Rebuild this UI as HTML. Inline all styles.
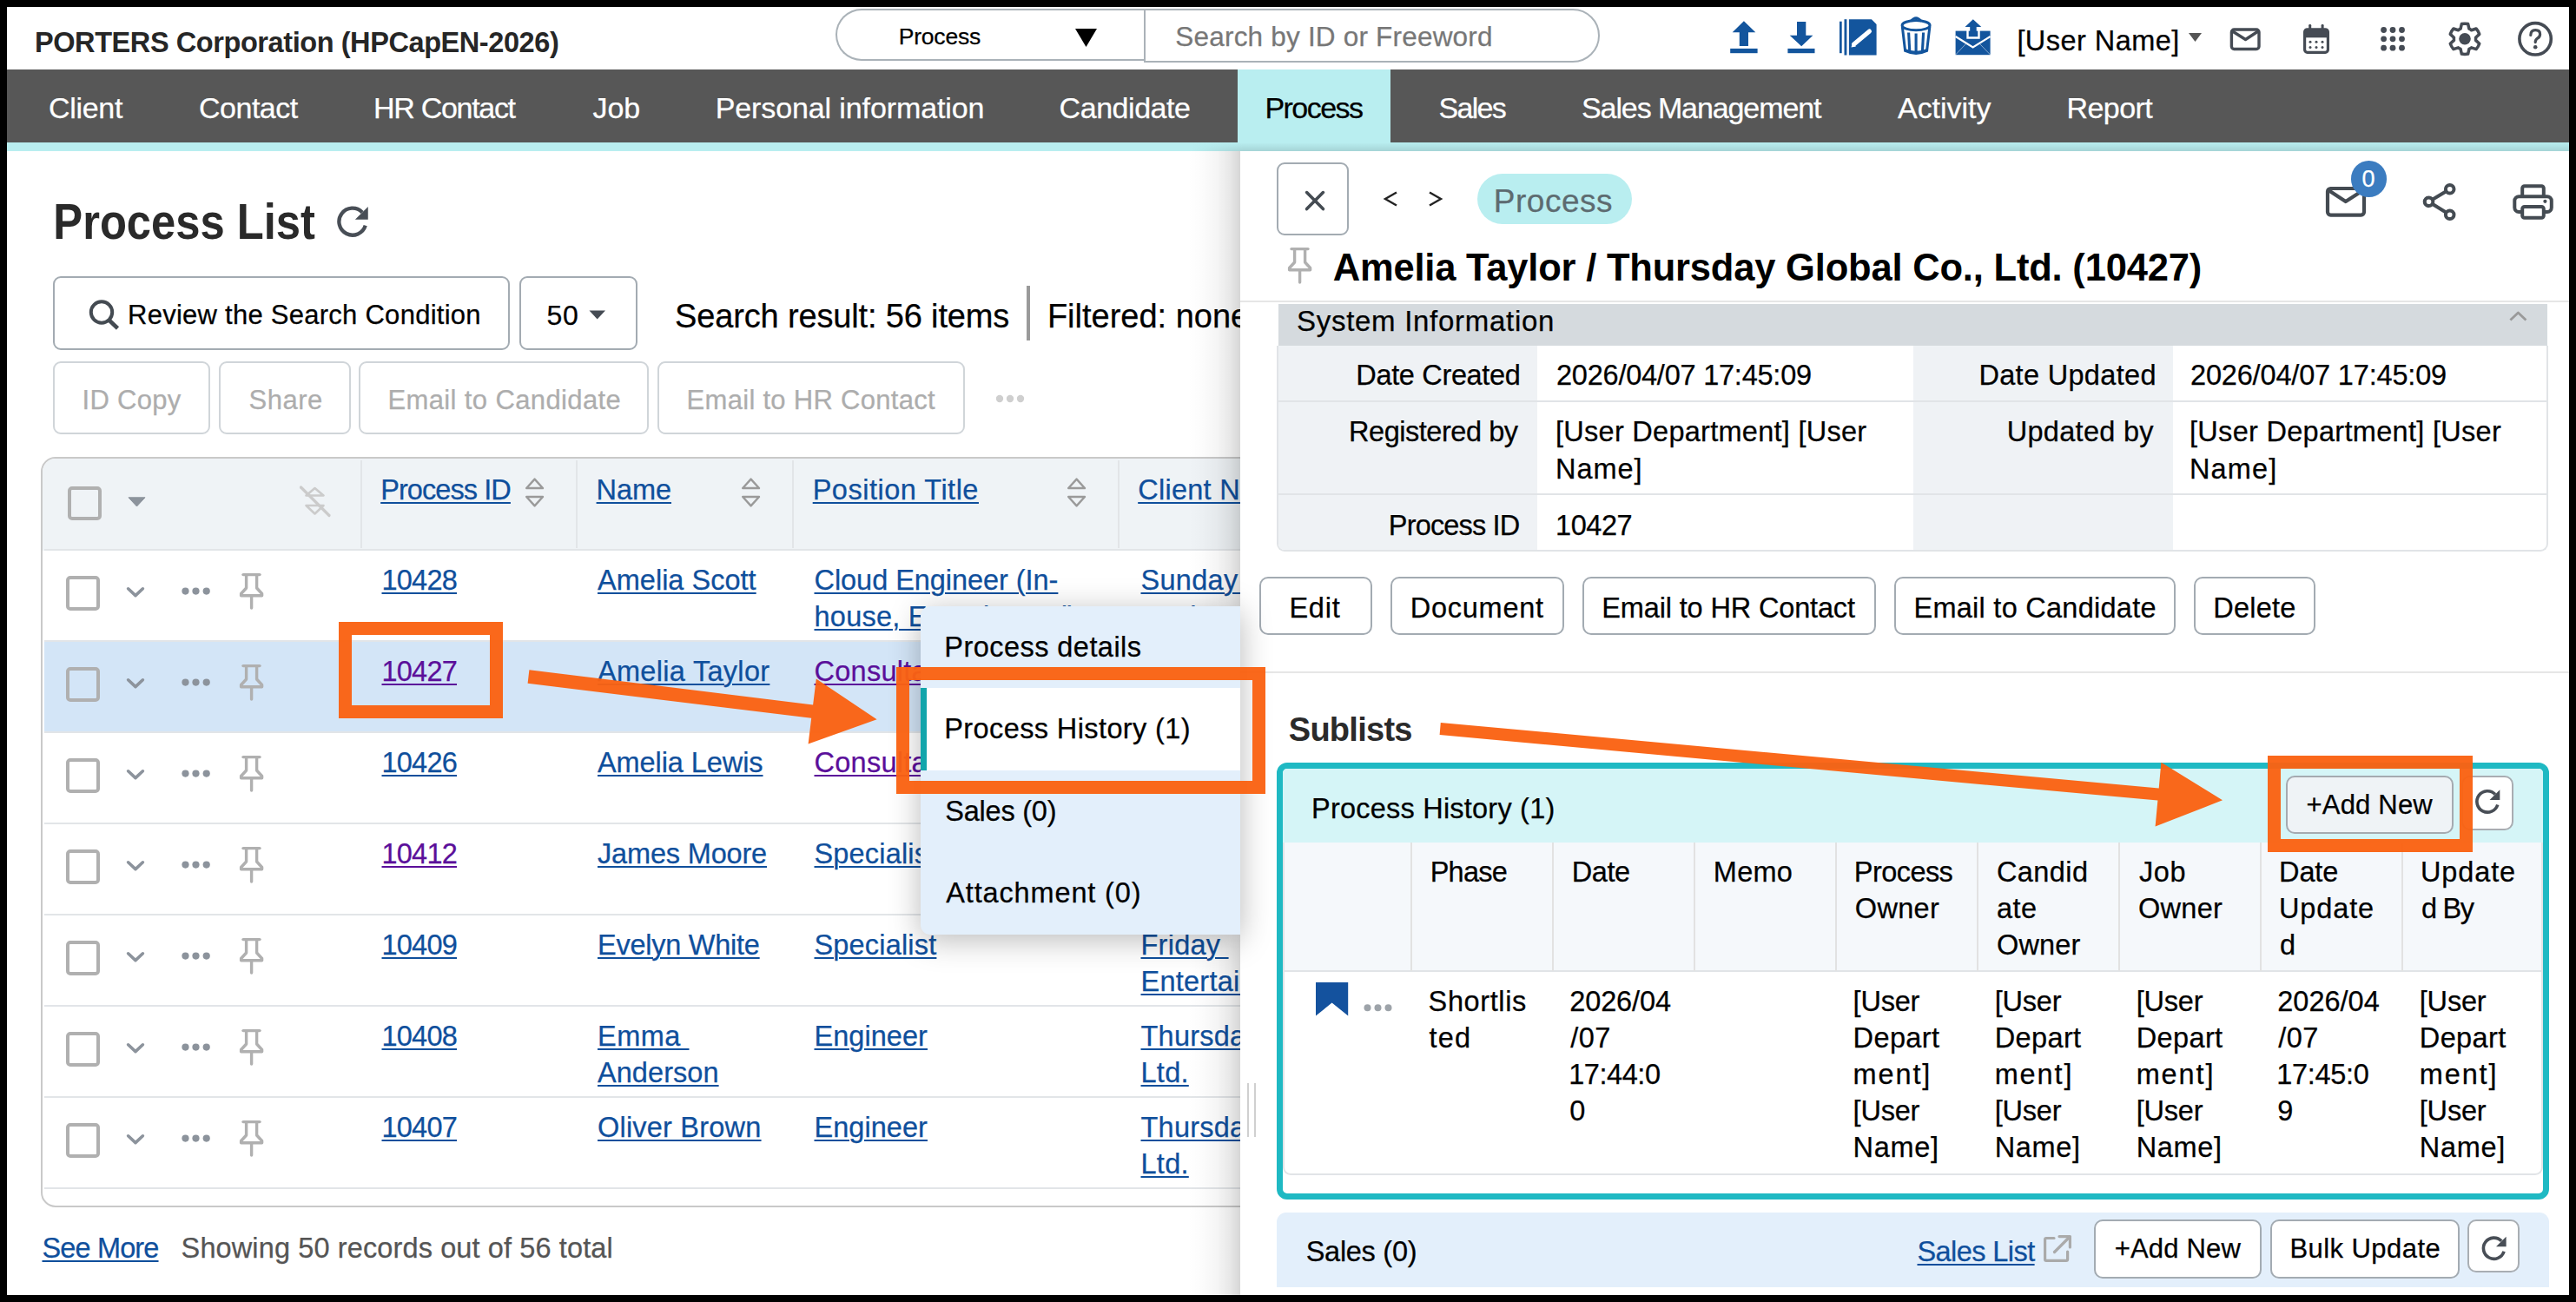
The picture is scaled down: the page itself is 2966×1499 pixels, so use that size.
<!DOCTYPE html>
<html><head><meta charset="utf-8"><title>Process List</title><style>
*{box-sizing:border-box;margin:0;padding:0}
html,body{width:2966px;height:1499px;overflow:hidden;background:#000}
body{font-family:"Liberation Sans",sans-serif;position:relative}
#r{position:absolute;left:0;top:0;width:2966px;height:1499px;overflow:hidden;background:#000}
#r div,#r span,#r svg{position:absolute}
.t{white-space:pre;display:block}
</style></head><body><div id="r">
<div style="left:8.0px;top:8.0px;width:2950.0px;height:1483.2px;background:#fff;"></div>
<span class="t" style="left:40.0px;top:29.0px;font-size:32.5px;line-height:41px;color:#262626;font-weight:700;letter-spacing:-0.42px;">PORTERS Corporation (HPCapEN-2026)</span>
<div style="left:962.0px;top:10.0px;width:357.0px;height:59.5px;border:2px solid #aab2b8;border-right:none;border-radius:30px 0 0 30px;background:#fff;"></div>
<span class="t" style="left:1034.7px;top:26.4px;font-size:26.5px;line-height:33px;color:#000;-webkit-text-stroke:0.25px;letter-spacing:-0.20px;">Process</span>
<svg style="left:1238.0px;top:32.6px;" width="25.0" height="21.0" viewBox="0 0 25 21"><polygon points="0,0 25,0 12.5,21" fill="#000"/></svg>
<div style="left:1317.0px;top:10.0px;width:525.0px;height:61.5px;border:2px solid #aab2b8;border-radius:0 31px 31px 0;background:#fff;"></div>
<span class="t" style="left:1353.3px;top:22.6px;font-size:31.5px;line-height:39px;color:#777;-webkit-text-stroke:0.25px;letter-spacing:0.20px;">Search by ID or Freeword</span>
<svg style="left:1990.0px;top:20.0px;" width="36.0" height="46.0" viewBox="0 0 36 46"><g fill="#13559d"><polygon points="17.9,4.3 31.3,17.2 23,17.2 23,32.9 12.8,32.9 12.8,17.2 4.7,17.2"/><rect x="2.2" y="35.9" width="31.4" height="5.3"/></g></svg>
<svg style="left:2056.0px;top:20.0px;" width="36.0" height="46.0" viewBox="0 0 36 46"><g fill="#13559d"><polygon points="13,5.1 23.3,5.1 23.3,20.7 31.4,20.7 18.2,33.3 4.7,20.7 13,20.7"/><rect x="2.4" y="35.9" width="31.1" height="5.3"/></g></svg>
<svg style="left:2116.0px;top:20.0px;" width="48.0" height="46.0" viewBox="0 0 48 46"><g fill="#13559d"><rect x="2" y="4.7" width="2.7" height="36.5"/><rect x="7.5" y="2.2" width="2.9" height="41.3"/><polygon points="12.9,2.2 38.9,2.2 44.6,7.9 44.6,43.5 12.9,43.5"/></g><line x1="18.5" y1="31" x2="36.5" y2="16" stroke="#fff" stroke-width="5" stroke-linecap="round"/><polygon points="15.5,34.5 17,29 21,33.5" fill="#fff"/></svg>
<svg style="left:2186.0px;top:18.0px;" width="40.0" height="48.0" viewBox="0 0 40 48"><g fill="none" stroke="#13559d" stroke-width="3"><ellipse cx="20.1" cy="11.2" rx="16" ry="5.6"/><path d="M4.3 12.5 L7.6 40.5 Q20.1 46.5 32.6 40.5 L35.9 12.5"/><path d="M14 6.6 Q20.1 -1.4 26.2 6.6" stroke-width="2.6"/></g><g stroke="#13559d" stroke-width="3.1"><line x1="11.6" y1="19.5" x2="12.8" y2="41.6"/><line x1="20.1" y1="20.5" x2="20.1" y2="43.2"/><line x1="28.6" y1="19.5" x2="27.4" y2="41.6"/></g><path d="M7.6 40.5 Q20.1 46.5 32.6 40.5 L32.9 38 Q20.1 43.5 7.3 38Z" fill="#13559d"/></svg>
<svg style="left:2249.0px;top:18.0px;" width="46.0" height="48.0" viewBox="0 0 46 48"><g fill="#13559d"><rect x="2.6" y="17.6" width="40" height="27.6"/><polygon points="22.8,4.2 32.3,13.1 26.7,13.1 26.7,22.7 19.2,22.7 19.2,13.1 13.5,13.1"/></g><path d="M16.5 17 L16.5 25.5 L29.5 25.5 L29.5 17" fill="none" stroke="#fff" stroke-width="2.4"/><path d="M2.6 24 L22.6 36.5 L42.6 24" fill="none" stroke="#fff" stroke-width="2.2"/><path d="M2.6 45 L15 32 M42.6 45 L30 32" stroke="#fff" stroke-width="1" opacity=".5"/></svg>
<span class="t" style="left:2322.4px;top:27.1px;font-size:32.5px;line-height:41px;color:#000;-webkit-text-stroke:0.25px;letter-spacing:0.45px;">[User Name]</span>
<svg style="left:2520.0px;top:38.0px;" width="15.0" height="10.0" viewBox="0 0 15 10"><polygon points="0,0 15,0 7.5,10" fill="#555"/></svg>
<svg style="left:2566.0px;top:30.0px;" width="40.0" height="30.0" viewBox="0 0 40 30"><rect x="3.4" y="4" width="31.6" height="22.5" rx="3" fill="none" stroke="#454b54" stroke-width="3.4"/><path d="M4.5 6 L19.5 15.5 L34 6" fill="none" stroke="#454b54" stroke-width="3.4" stroke-linejoin="round"/></svg>
<svg style="left:2650.0px;top:26.0px;" width="34.0" height="38.0" viewBox="0 0 34 38"><rect x="3.6" y="7.8" width="26.8" height="26.5" rx="3" fill="none" stroke="#454b54" stroke-width="3.2"/><rect x="3.6" y="7.8" width="26.8" height="9.5" fill="#454b54"/><rect x="8.2" y="2" width="3" height="8" rx="1.2" fill="#454b54"/><rect x="22.6" y="2" width="3" height="8" rx="1.2" fill="#454b54"/><g fill="#454b54"><circle cx="10" cy="22.3" r="1.5"/><circle cx="17" cy="22.3" r="1.5"/><circle cx="24" cy="22.3" r="1.5"/><circle cx="10" cy="28.5" r="1.5"/><circle cx="17" cy="28.5" r="1.5"/><circle cx="24" cy="28.5" r="1.5"/></g></svg>
<svg style="left:2740.0px;top:30.0px;" width="30.0" height="30.0" viewBox="0 0 30 30"><g fill="#454b54"><circle cx="4.6" cy="4.5" r="3.4"/><circle cx="4.6" cy="14.8" r="3.4"/><circle cx="4.6" cy="25.2" r="3.4"/><circle cx="15" cy="4.5" r="3.4"/><circle cx="15" cy="14.8" r="3.4"/><circle cx="15" cy="25.2" r="3.4"/><circle cx="25.5" cy="4.5" r="3.4"/><circle cx="25.5" cy="14.8" r="3.4"/><circle cx="25.5" cy="25.2" r="3.4"/></g></svg>
<svg style="left:2818.0px;top:25.0px;" width="40.0" height="40.0" viewBox="0 0 40 40"><g transform="translate(20,19.8)"><path d="M-4.92 -11.60 L-3.66 -17.22 A17.6 17.6 0 0 1 3.66 -17.22 L4.92 -11.60 A12.6 12.6 0 0 1 7.58 -10.06 L13.08 -11.78 A17.6 17.6 0 0 1 16.74 -5.44 L12.51 -1.54 A12.6 12.6 0 0 1 12.51 1.54 L16.74 5.44 A17.6 17.6 0 0 1 13.08 11.78 L7.58 10.06 A12.6 12.6 0 0 1 4.92 11.60 L3.66 17.22 A17.6 17.6 0 0 1 -3.66 17.22 L-4.92 11.60 A12.6 12.6 0 0 1 -7.58 10.06 L-13.08 11.78 A17.6 17.6 0 0 1 -16.74 5.44 L-12.51 1.54 A12.6 12.6 0 0 1 -12.51 -1.54 L-16.74 -5.44 A17.6 17.6 0 0 1 -13.08 -11.78 L-7.58 -10.06 A12.6 12.6 0 0 1 -4.92 -11.60 Z" fill="none" stroke="#454b54" stroke-width="3.5" stroke-linejoin="round"/><circle r="6.8" fill="#454b54"/></g></svg>
<svg style="left:2897.0px;top:23.0px;" width="44.0" height="44.0" viewBox="0 0 44 44"><circle cx="22.1" cy="21.8" r="18.2" fill="none" stroke="#454b54" stroke-width="3.6"/><path d="M16.8 17.5 Q16.8 11.6 22.3 11.6 Q27.6 11.6 27.6 16.4 Q27.6 19.3 24.6 21.2 Q22.2 22.8 22.2 25.6" fill="none" stroke="#454b54" stroke-width="3.2" stroke-linecap="round"/><circle cx="22.2" cy="31.2" r="2.3" fill="#454b54"/></svg>
<div style="left:8.0px;top:80.0px;width:2950.0px;height:84.0px;background:#575757;"></div>
<div style="left:8.0px;top:164.0px;width:2950.0px;height:10.0px;background:#b9eef0;"></div>
<div style="left:1425.0px;top:80.0px;width:176.0px;height:94.0px;background:#b9eef0;"></div>
<span class="t" style="left:56.0px;top:103.0px;font-size:34px;line-height:42px;color:#fff;-webkit-text-stroke:0.25px;letter-spacing:-0.30px;">Client</span>
<span class="t" style="left:229.0px;top:103.0px;font-size:34px;line-height:42px;color:#fff;-webkit-text-stroke:0.25px;letter-spacing:-0.49px;">Contact</span>
<span class="t" style="left:430.0px;top:103.0px;font-size:34px;line-height:42px;color:#fff;-webkit-text-stroke:0.25px;letter-spacing:-1.30px;">HR Contact</span>
<span class="t" style="left:682.5px;top:103.0px;font-size:34px;line-height:42px;color:#fff;-webkit-text-stroke:0.25px;letter-spacing:-0.05px;">Job</span>
<span class="t" style="left:823.7px;top:103.0px;font-size:34px;line-height:42px;color:#fff;-webkit-text-stroke:0.25px;letter-spacing:-0.11px;">Personal information</span>
<span class="t" style="left:1219.6px;top:103.0px;font-size:34px;line-height:42px;color:#fff;-webkit-text-stroke:0.25px;letter-spacing:-0.46px;">Candidate</span>
<span class="t" style="left:1456.4px;top:103.0px;font-size:34px;line-height:42px;color:#000;-webkit-text-stroke:0.25px;letter-spacing:-1.54px;">Process</span>
<span class="t" style="left:1656.6px;top:103.0px;font-size:34px;line-height:42px;color:#fff;-webkit-text-stroke:0.25px;letter-spacing:-1.74px;">Sales</span>
<span class="t" style="left:1821.0px;top:103.0px;font-size:34px;line-height:42px;color:#fff;-webkit-text-stroke:0.25px;letter-spacing:-1.10px;">Sales Management</span>
<span class="t" style="left:2185.0px;top:103.0px;font-size:34px;line-height:42px;color:#fff;-webkit-text-stroke:0.25px;letter-spacing:-0.04px;">Activity</span>
<span class="t" style="left:2379.5px;top:103.0px;font-size:34px;line-height:42px;color:#fff;-webkit-text-stroke:0.25px;letter-spacing:-0.56px;">Report</span>
<div style="left:1372.0px;top:164.0px;width:1586.0px;height:10.0px;background:linear-gradient(to bottom,rgba(0,0,0,0),rgba(0,0,0,.11));"></div>
<div style="left:1372.0px;top:164.0px;width:60.0px;height:10.0px;background:linear-gradient(to right,#b9eef0,rgba(185,238,240,0));"></div>
<span class="t" style="left:60.9px;top:220.2px;font-size:57px;line-height:71px;color:#2a2a2a;font-weight:700;transform:scaleX(0.8895);transform-origin:3.0px 0;">Process List</span>
<svg style="left:384.0px;top:232.0px;" width="46.0" height="46.0" viewBox="0 0 46 46"><path d="M33.05 12.43 A15.5 15.5 0 1 0 36.72 27.73" fill="none" stroke="#484e56" stroke-width="4.3"/><polygon points="39.75,5.95 39.75,20.83 24.87,20.83" fill="#484e56"/></svg>
<div style="left:60.9px;top:317.5px;width:526.1px;height:85.0px;border:2px solid #a3abb2;border-radius:9px;background:#fff;"></div>
<svg style="left:100.0px;top:342.0px;" width="42.0" height="42.0" viewBox="0 0 42 42"><circle cx="17" cy="17.5" r="12.2" fill="none" stroke="#444b52" stroke-width="4"/><line x1="26" y1="27" x2="35.5" y2="36" stroke="#444b52" stroke-width="4.6" stroke-linecap="butt"/></svg>
<span class="t" style="left:147.0px;top:343.3px;font-size:31px;line-height:39px;color:#000;-webkit-text-stroke:0.25px;letter-spacing:0.26px;">Review the Search Condition</span>
<div style="left:597.5px;top:317.5px;width:136.7px;height:85.0px;border:2px solid #a3abb2;border-radius:9px;background:#fff;"></div>
<span class="t" style="left:629.4px;top:343.0px;font-size:32px;line-height:40px;color:#000;-webkit-text-stroke:0.25px;letter-spacing:0.80px;">50</span>
<svg style="left:678.0px;top:357.0px;" width="20.0" height="11.0" viewBox="0 0 20 11"><polygon points="0.5,0.5 19,0.5 9.7,10.5" fill="#454b54"/></svg>
<span class="t" style="left:777.0px;top:339.6px;font-size:38px;line-height:48px;color:#000;-webkit-text-stroke:0.25px;letter-spacing:-0.15px;">Search result: 56 items</span>
<div style="left:1182.4px;top:329.0px;width:3.6px;height:62.7px;background:#9a9a9a;"></div>
<span class="t" style="left:1205.9px;top:339.6px;font-size:38px;line-height:48px;color:#000;-webkit-text-stroke:0.25px;">Filtered: none</span>
<div style="left:60.9px;top:415.9px;width:181.0px;height:83.9px;border:2px solid #d0d5d9;border-radius:9px;background:#fff;"></div>
<span class="t" style="left:94.6px;top:441.1px;font-size:31px;line-height:39px;color:#adadad;-webkit-text-stroke:0.25px;letter-spacing:0.27px;">ID Copy</span>
<div style="left:252.4px;top:415.9px;width:151.7px;height:83.9px;border:2px solid #d0d5d9;border-radius:9px;background:#fff;"></div>
<span class="t" style="left:286.5px;top:441.1px;font-size:31px;line-height:39px;color:#adadad;-webkit-text-stroke:0.25px;letter-spacing:0.50px;">Share</span>
<div style="left:413.3px;top:415.9px;width:333.3px;height:83.9px;border:2px solid #d0d5d9;border-radius:9px;background:#fff;"></div>
<span class="t" style="left:446.4px;top:441.1px;font-size:31px;line-height:39px;color:#adadad;-webkit-text-stroke:0.25px;letter-spacing:0.38px;">Email to Candidate</span>
<div style="left:757.1px;top:415.9px;width:353.5px;height:83.9px;border:2px solid #d0d5d9;border-radius:9px;background:#fff;"></div>
<span class="t" style="left:790.6px;top:441.1px;font-size:31px;line-height:39px;color:#adadad;-webkit-text-stroke:0.25px;letter-spacing:0.29px;">Email to HR Contact</span>
<svg style="left:1145.0px;top:453.0px;" width="36.0" height="12.0" viewBox="0 0 36 12"><g fill="#cfcfcf"><circle cx="6" cy="6" r="4.2"/><circle cx="18" cy="6" r="4.2"/><circle cx="30" cy="6" r="4.2"/></g></svg>
<div style="left:47.4px;top:526.3px;width:1452.6px;height:864.1px;border:2px solid #c9c9c9;border-radius:17px;background:#fff;overflow:hidden;"><div style="left:0;top:0;width:1500px;height:105.5px;background:#eff3f6"></div></div>
<div style="left:415.2px;top:530.0px;width:2.0px;height:101.0px;background:#e2e5e8;"></div>
<div style="left:663.4px;top:530.0px;width:2.0px;height:101.0px;background:#e2e5e8;"></div>
<div style="left:912.0px;top:530.0px;width:2.0px;height:101.0px;background:#e2e5e8;"></div>
<div style="left:1286.7px;top:530.0px;width:2.0px;height:101.0px;background:#e2e5e8;"></div>
<div style="left:50.5px;top:738.8px;width:1449.5px;height:103.6px;background:#d3e5f7;"></div>
<div style="left:50.5px;top:632.0px;width:1449.5px;height:2.0px;background:#e2e5e8;"></div>
<div style="left:50.5px;top:737.0px;width:1449.5px;height:2.0px;background:#e2e5e8;"></div>
<div style="left:50.5px;top:842.0px;width:1449.5px;height:2.0px;background:#e2e5e8;"></div>
<div style="left:50.5px;top:947.0px;width:1449.5px;height:2.0px;background:#e2e5e8;"></div>
<div style="left:50.5px;top:1052.0px;width:1449.5px;height:2.0px;background:#e2e5e8;"></div>
<div style="left:50.5px;top:1157.0px;width:1449.5px;height:2.0px;background:#e2e5e8;"></div>
<div style="left:50.5px;top:1262.0px;width:1449.5px;height:2.0px;background:#e2e5e8;"></div>
<div style="left:50.5px;top:1367.0px;width:1449.5px;height:2.0px;background:#e2e5e8;"></div>
<div style="left:77.7px;top:559.6px;width:39.2px;height:39.2px;border:4px solid #b0b0b0;border-radius:5px;"></div>
<svg style="left:147.0px;top:572.0px;" width="21.0" height="12.0" viewBox="0 0 21 12"><polygon points="1,0.8 20,0.8 10.5,11" fill="#8c939c" stroke="#8c939c" stroke-width="1" stroke-linejoin="round"/></svg>
<svg style="left:343.0px;top:558.0px;" width="40.0" height="40.0" viewBox="0 0 40 40"><g fill="none" stroke="#cbcbcb" stroke-width="2.6" stroke-linejoin="round" stroke-linecap="round"><path d="M9.5 12.5 L19.5 4 L29.5 12.5 Z"/><path d="M9.5 24 L29.5 24 L19.5 33.5 Z"/><line x1="3.5" y1="3" x2="36" y2="35.5" stroke-width="3.2"/></g></svg>
<span class="t" style="left:438.2px;top:543.9px;font-size:32.5px;line-height:41px;color:#0f4f9c;-webkit-text-stroke:0.25px;letter-spacing:-0.92px;text-decoration:underline;text-decoration-thickness:2.4px;text-underline-offset:3px;">Process ID</span>
<svg style="left:603.5px;top:549.0px;" width="24.0" height="36.0" viewBox="0 0 24 36"><g fill="none" stroke="#9a9a9a" stroke-width="2.4" stroke-linejoin="round"><path d="M2.2 13 L11.6 2.6 L21 13 Z"/><path d="M2.2 23 L21 23 L11.6 33.4 Z"/></g></svg>
<span class="t" style="left:686.6px;top:543.9px;font-size:32.5px;line-height:41px;color:#0f4f9c;-webkit-text-stroke:0.25px;letter-spacing:-0.07px;text-decoration:underline;text-decoration-thickness:2.4px;text-underline-offset:3px;">Name</span>
<svg style="left:853.2px;top:549.0px;" width="24.0" height="36.0" viewBox="0 0 24 36"><g fill="none" stroke="#9a9a9a" stroke-width="2.4" stroke-linejoin="round"><path d="M2.2 13 L11.6 2.6 L21 13 Z"/><path d="M2.2 23 L21 23 L11.6 33.4 Z"/></g></svg>
<span class="t" style="left:935.7px;top:543.9px;font-size:32.5px;line-height:41px;color:#0f4f9c;-webkit-text-stroke:0.25px;letter-spacing:0.50px;text-decoration:underline;text-decoration-thickness:2.4px;text-underline-offset:3px;">Position Title</span>
<svg style="left:1227.6px;top:549.0px;" width="24.0" height="36.0" viewBox="0 0 24 36"><g fill="none" stroke="#9a9a9a" stroke-width="2.4" stroke-linejoin="round"><path d="M2.2 13 L11.6 2.6 L21 13 Z"/><path d="M2.2 23 L21 23 L11.6 33.4 Z"/></g></svg>
<span class="t" style="left:1310.2px;top:543.9px;font-size:32.5px;line-height:41px;color:#0f4f9c;-webkit-text-stroke:0.25px;letter-spacing:0.27px;text-decoration:underline;text-decoration-thickness:2.4px;text-underline-offset:3px;">Client Name</span>
<div style="left:75.6px;top:663.4px;width:39.3px;height:39.2px;border:4px solid #b0b0b0;border-radius:5px;"></div>
<svg style="left:144.0px;top:673.8px;" width="24.0" height="16.0" viewBox="0 0 24 16"><path d="M3.6 3.8 L12 11.6 L20.4 3.8" fill="none" stroke="#8c939c" stroke-width="3.6" stroke-linecap="round" stroke-linejoin="round"/></svg>
<svg style="left:208.0px;top:675.3px;" width="36.0" height="12.0" viewBox="0 0 36 12"><g fill="#8c939c"><circle cx="5.5" cy="5.6" r="4.1"/><circle cx="17.5" cy="5.6" r="4.1"/><circle cx="29.7" cy="5.6" r="4.1"/></g></svg>
<svg style="left:274.6px;top:659.0px;" width="30.0" height="44.0" viewBox="0 0 30 44"><g fill="none" stroke="#b0b0b0" stroke-width="3.4" stroke-linecap="round" stroke-linejoin="round"><line x1="5" y1="2.6" x2="24" y2="2.6"/><path d="M8.6 3 L8.6 18 L2.6 24.5 L2.6 26.8 L26.6 26.8 L26.6 24.5 L20.6 18 L20.6 3"/><line x1="14.6" y1="27" x2="14.6" y2="41"/></g></svg>
<span class="t" style="left:439.5px;top:647.9px;font-size:32.5px;line-height:41px;color:#0f4f9c;-webkit-text-stroke:0.25px;letter-spacing:-0.77px;text-decoration:underline;text-decoration-thickness:2.4px;text-underline-offset:3px;">10428</span>
<span class="t" style="left:688.0px;top:647.9px;font-size:32.5px;line-height:41px;color:#0f4f9c;-webkit-text-stroke:0.25px;letter-spacing:0.02px;text-decoration:underline;text-decoration-thickness:2.4px;text-underline-offset:3px;">Amelia Scott</span>
<span class="t" style="left:937.5px;top:647.9px;font-size:32.5px;line-height:41px;color:#0f4f9c;-webkit-text-stroke:0.25px;letter-spacing:-0.05px;text-decoration:underline;text-decoration-thickness:2.4px;text-underline-offset:3px;">Cloud Engineer (In-</span>
<span class="t" style="left:937.5px;top:689.9px;font-size:32.5px;line-height:41px;color:#0f4f9c;-webkit-text-stroke:0.25px;letter-spacing:0.25px;text-decoration:underline;text-decoration-thickness:2.4px;text-underline-offset:3px;">house, Experienced)</span>
<span class="t" style="left:1313.5px;top:647.9px;font-size:32.5px;line-height:41px;color:#0f4f9c;-webkit-text-stroke:0.25px;letter-spacing:0.30px;text-decoration:underline;text-decoration-thickness:2.4px;text-underline-offset:3px;">Sunday </span>
<span class="t" style="left:1313.5px;top:689.9px;font-size:32.5px;line-height:41px;color:#0f4f9c;-webkit-text-stroke:0.25px;letter-spacing:0.30px;text-decoration:underline;text-decoration-thickness:2.4px;text-underline-offset:3px;">Market</span>
<div style="left:75.6px;top:768.4px;width:39.3px;height:39.2px;border:4px solid #b0b0b0;border-radius:5px;"></div>
<svg style="left:144.0px;top:778.8px;" width="24.0" height="16.0" viewBox="0 0 24 16"><path d="M3.6 3.8 L12 11.6 L20.4 3.8" fill="none" stroke="#8c939c" stroke-width="3.6" stroke-linecap="round" stroke-linejoin="round"/></svg>
<svg style="left:208.0px;top:780.3px;" width="36.0" height="12.0" viewBox="0 0 36 12"><g fill="#8c939c"><circle cx="5.5" cy="5.6" r="4.1"/><circle cx="17.5" cy="5.6" r="4.1"/><circle cx="29.7" cy="5.6" r="4.1"/></g></svg>
<svg style="left:274.6px;top:764.0px;" width="30.0" height="44.0" viewBox="0 0 30 44"><g fill="none" stroke="#b0b0b0" stroke-width="3.4" stroke-linecap="round" stroke-linejoin="round"><line x1="5" y1="2.6" x2="24" y2="2.6"/><path d="M8.6 3 L8.6 18 L2.6 24.5 L2.6 26.8 L26.6 26.8 L26.6 24.5 L20.6 18 L20.6 3"/><line x1="14.6" y1="27" x2="14.6" y2="41"/></g></svg>
<span class="t" style="left:439.5px;top:752.9px;font-size:32.5px;line-height:41px;color:#5b0f9a;-webkit-text-stroke:0.25px;letter-spacing:-0.77px;text-decoration:underline;text-decoration-thickness:2.4px;text-underline-offset:3px;">10427</span>
<span class="t" style="left:688.0px;top:752.9px;font-size:32.5px;line-height:41px;color:#0f4f9c;-webkit-text-stroke:0.25px;letter-spacing:0.30px;text-decoration:underline;text-decoration-thickness:2.4px;text-underline-offset:3px;">Amelia Taylor</span>
<span class="t" style="left:937.5px;top:752.9px;font-size:32.5px;line-height:41px;color:#5b0f9a;-webkit-text-stroke:0.25px;letter-spacing:0.26px;text-decoration:underline;text-decoration-thickness:2.4px;text-underline-offset:3px;">Consultant</span>
<span class="t" style="left:1313.5px;top:752.9px;font-size:32.5px;line-height:41px;color:#0f4f9c;-webkit-text-stroke:0.25px;letter-spacing:0.27px;text-decoration:underline;text-decoration-thickness:2.4px;text-underline-offset:3px;">Thursday </span>
<span class="t" style="left:1313.5px;top:794.9px;font-size:32.5px;line-height:41px;color:#0f4f9c;-webkit-text-stroke:0.25px;letter-spacing:0.27px;text-decoration:underline;text-decoration-thickness:2.4px;text-underline-offset:3px;">Ltd.</span>
<div style="left:75.6px;top:873.4px;width:39.3px;height:39.2px;border:4px solid #b0b0b0;border-radius:5px;"></div>
<svg style="left:144.0px;top:883.8px;" width="24.0" height="16.0" viewBox="0 0 24 16"><path d="M3.6 3.8 L12 11.6 L20.4 3.8" fill="none" stroke="#8c939c" stroke-width="3.6" stroke-linecap="round" stroke-linejoin="round"/></svg>
<svg style="left:208.0px;top:885.3px;" width="36.0" height="12.0" viewBox="0 0 36 12"><g fill="#8c939c"><circle cx="5.5" cy="5.6" r="4.1"/><circle cx="17.5" cy="5.6" r="4.1"/><circle cx="29.7" cy="5.6" r="4.1"/></g></svg>
<svg style="left:274.6px;top:869.0px;" width="30.0" height="44.0" viewBox="0 0 30 44"><g fill="none" stroke="#b0b0b0" stroke-width="3.4" stroke-linecap="round" stroke-linejoin="round"><line x1="5" y1="2.6" x2="24" y2="2.6"/><path d="M8.6 3 L8.6 18 L2.6 24.5 L2.6 26.8 L26.6 26.8 L26.6 24.5 L20.6 18 L20.6 3"/><line x1="14.6" y1="27" x2="14.6" y2="41"/></g></svg>
<span class="t" style="left:439.5px;top:857.9px;font-size:32.5px;line-height:41px;color:#0f4f9c;-webkit-text-stroke:0.25px;letter-spacing:-0.77px;text-decoration:underline;text-decoration-thickness:2.4px;text-underline-offset:3px;">10426</span>
<span class="t" style="left:688.0px;top:857.9px;font-size:32.5px;line-height:41px;color:#0f4f9c;-webkit-text-stroke:0.25px;letter-spacing:-0.08px;text-decoration:underline;text-decoration-thickness:2.4px;text-underline-offset:3px;">Amelia Lewis</span>
<span class="t" style="left:937.5px;top:857.9px;font-size:32.5px;line-height:41px;color:#5b0f9a;-webkit-text-stroke:0.25px;letter-spacing:0.26px;text-decoration:underline;text-decoration-thickness:2.4px;text-underline-offset:3px;">Consultant</span>
<span class="t" style="left:1313.5px;top:857.9px;font-size:32.5px;line-height:41px;color:#0f4f9c;-webkit-text-stroke:0.25px;letter-spacing:0.27px;text-decoration:underline;text-decoration-thickness:2.4px;text-underline-offset:3px;">Thursday </span>
<span class="t" style="left:1313.5px;top:899.9px;font-size:32.5px;line-height:41px;color:#0f4f9c;-webkit-text-stroke:0.25px;letter-spacing:0.27px;text-decoration:underline;text-decoration-thickness:2.4px;text-underline-offset:3px;">Ltd.</span>
<div style="left:75.6px;top:978.4px;width:39.3px;height:39.2px;border:4px solid #b0b0b0;border-radius:5px;"></div>
<svg style="left:144.0px;top:988.8px;" width="24.0" height="16.0" viewBox="0 0 24 16"><path d="M3.6 3.8 L12 11.6 L20.4 3.8" fill="none" stroke="#8c939c" stroke-width="3.6" stroke-linecap="round" stroke-linejoin="round"/></svg>
<svg style="left:208.0px;top:990.3px;" width="36.0" height="12.0" viewBox="0 0 36 12"><g fill="#8c939c"><circle cx="5.5" cy="5.6" r="4.1"/><circle cx="17.5" cy="5.6" r="4.1"/><circle cx="29.7" cy="5.6" r="4.1"/></g></svg>
<svg style="left:274.6px;top:974.0px;" width="30.0" height="44.0" viewBox="0 0 30 44"><g fill="none" stroke="#b0b0b0" stroke-width="3.4" stroke-linecap="round" stroke-linejoin="round"><line x1="5" y1="2.6" x2="24" y2="2.6"/><path d="M8.6 3 L8.6 18 L2.6 24.5 L2.6 26.8 L26.6 26.8 L26.6 24.5 L20.6 18 L20.6 3"/><line x1="14.6" y1="27" x2="14.6" y2="41"/></g></svg>
<span class="t" style="left:439.5px;top:962.9px;font-size:32.5px;line-height:41px;color:#5b0f9a;-webkit-text-stroke:0.25px;letter-spacing:-0.77px;text-decoration:underline;text-decoration-thickness:2.4px;text-underline-offset:3px;">10412</span>
<span class="t" style="left:688.0px;top:962.9px;font-size:32.5px;line-height:41px;color:#0f4f9c;-webkit-text-stroke:0.25px;letter-spacing:-0.17px;text-decoration:underline;text-decoration-thickness:2.4px;text-underline-offset:3px;">James Moore</span>
<span class="t" style="left:937.5px;top:962.9px;font-size:32.5px;line-height:41px;color:#0f4f9c;-webkit-text-stroke:0.25px;letter-spacing:0.18px;text-decoration:underline;text-decoration-thickness:2.4px;text-underline-offset:3px;">Specialist</span>
<span class="t" style="left:1313.5px;top:962.9px;font-size:32.5px;line-height:41px;color:#0f4f9c;-webkit-text-stroke:0.25px;letter-spacing:0.25px;text-decoration:underline;text-decoration-thickness:2.4px;text-underline-offset:3px;">Friday </span>
<span class="t" style="left:1313.5px;top:1004.9px;font-size:32.5px;line-height:41px;color:#0f4f9c;-webkit-text-stroke:0.25px;letter-spacing:0.25px;text-decoration:underline;text-decoration-thickness:2.4px;text-underline-offset:3px;">Entertainment</span>
<div style="left:75.6px;top:1083.4px;width:39.3px;height:39.2px;border:4px solid #b0b0b0;border-radius:5px;"></div>
<svg style="left:144.0px;top:1093.8px;" width="24.0" height="16.0" viewBox="0 0 24 16"><path d="M3.6 3.8 L12 11.6 L20.4 3.8" fill="none" stroke="#8c939c" stroke-width="3.6" stroke-linecap="round" stroke-linejoin="round"/></svg>
<svg style="left:208.0px;top:1095.3px;" width="36.0" height="12.0" viewBox="0 0 36 12"><g fill="#8c939c"><circle cx="5.5" cy="5.6" r="4.1"/><circle cx="17.5" cy="5.6" r="4.1"/><circle cx="29.7" cy="5.6" r="4.1"/></g></svg>
<svg style="left:274.6px;top:1079.0px;" width="30.0" height="44.0" viewBox="0 0 30 44"><g fill="none" stroke="#b0b0b0" stroke-width="3.4" stroke-linecap="round" stroke-linejoin="round"><line x1="5" y1="2.6" x2="24" y2="2.6"/><path d="M8.6 3 L8.6 18 L2.6 24.5 L2.6 26.8 L26.6 26.8 L26.6 24.5 L20.6 18 L20.6 3"/><line x1="14.6" y1="27" x2="14.6" y2="41"/></g></svg>
<span class="t" style="left:439.5px;top:1067.9px;font-size:32.5px;line-height:41px;color:#0f4f9c;-webkit-text-stroke:0.25px;letter-spacing:-0.77px;text-decoration:underline;text-decoration-thickness:2.4px;text-underline-offset:3px;">10409</span>
<span class="t" style="left:688.0px;top:1067.9px;font-size:32.5px;line-height:41px;color:#0f4f9c;-webkit-text-stroke:0.25px;letter-spacing:-0.25px;text-decoration:underline;text-decoration-thickness:2.4px;text-underline-offset:3px;">Evelyn White</span>
<span class="t" style="left:937.5px;top:1067.9px;font-size:32.5px;line-height:41px;color:#0f4f9c;-webkit-text-stroke:0.25px;letter-spacing:0.18px;text-decoration:underline;text-decoration-thickness:2.4px;text-underline-offset:3px;">Specialist</span>
<span class="t" style="left:1313.5px;top:1067.9px;font-size:32.5px;line-height:41px;color:#0f4f9c;-webkit-text-stroke:0.25px;letter-spacing:0.25px;text-decoration:underline;text-decoration-thickness:2.4px;text-underline-offset:3px;">Friday </span>
<span class="t" style="left:1313.5px;top:1109.9px;font-size:32.5px;line-height:41px;color:#0f4f9c;-webkit-text-stroke:0.25px;letter-spacing:0.25px;text-decoration:underline;text-decoration-thickness:2.4px;text-underline-offset:3px;">Entertainment</span>
<div style="left:75.6px;top:1188.4px;width:39.3px;height:39.2px;border:4px solid #b0b0b0;border-radius:5px;"></div>
<svg style="left:144.0px;top:1198.8px;" width="24.0" height="16.0" viewBox="0 0 24 16"><path d="M3.6 3.8 L12 11.6 L20.4 3.8" fill="none" stroke="#8c939c" stroke-width="3.6" stroke-linecap="round" stroke-linejoin="round"/></svg>
<svg style="left:208.0px;top:1200.3px;" width="36.0" height="12.0" viewBox="0 0 36 12"><g fill="#8c939c"><circle cx="5.5" cy="5.6" r="4.1"/><circle cx="17.5" cy="5.6" r="4.1"/><circle cx="29.7" cy="5.6" r="4.1"/></g></svg>
<svg style="left:274.6px;top:1184.0px;" width="30.0" height="44.0" viewBox="0 0 30 44"><g fill="none" stroke="#b0b0b0" stroke-width="3.4" stroke-linecap="round" stroke-linejoin="round"><line x1="5" y1="2.6" x2="24" y2="2.6"/><path d="M8.6 3 L8.6 18 L2.6 24.5 L2.6 26.8 L26.6 26.8 L26.6 24.5 L20.6 18 L20.6 3"/><line x1="14.6" y1="27" x2="14.6" y2="41"/></g></svg>
<span class="t" style="left:439.5px;top:1172.9px;font-size:32.5px;line-height:41px;color:#0f4f9c;-webkit-text-stroke:0.25px;letter-spacing:-0.77px;text-decoration:underline;text-decoration-thickness:2.4px;text-underline-offset:3px;">10408</span>
<span class="t" style="left:688.0px;top:1172.9px;font-size:32.5px;line-height:41px;color:#0f4f9c;-webkit-text-stroke:0.25px;letter-spacing:0.51px;text-decoration:underline;text-decoration-thickness:2.4px;text-underline-offset:3px;">Emma </span>
<span class="t" style="left:688.0px;top:1214.9px;font-size:32.5px;line-height:41px;color:#0f4f9c;-webkit-text-stroke:0.25px;letter-spacing:0.06px;text-decoration:underline;text-decoration-thickness:2.4px;text-underline-offset:3px;">Anderson</span>
<span class="t" style="left:937.5px;top:1172.9px;font-size:32.5px;line-height:41px;color:#0f4f9c;-webkit-text-stroke:0.25px;letter-spacing:0.05px;text-decoration:underline;text-decoration-thickness:2.4px;text-underline-offset:3px;">Engineer</span>
<span class="t" style="left:1313.5px;top:1172.9px;font-size:32.5px;line-height:41px;color:#0f4f9c;-webkit-text-stroke:0.25px;letter-spacing:0.24px;text-decoration:underline;text-decoration-thickness:2.4px;text-underline-offset:3px;">Thursday Global Co.,</span>
<span class="t" style="left:1313.5px;top:1214.9px;font-size:32.5px;line-height:41px;color:#0f4f9c;-webkit-text-stroke:0.25px;letter-spacing:0.27px;text-decoration:underline;text-decoration-thickness:2.4px;text-underline-offset:3px;">Ltd.</span>
<div style="left:75.6px;top:1293.4px;width:39.3px;height:39.2px;border:4px solid #b0b0b0;border-radius:5px;"></div>
<svg style="left:144.0px;top:1303.8px;" width="24.0" height="16.0" viewBox="0 0 24 16"><path d="M3.6 3.8 L12 11.6 L20.4 3.8" fill="none" stroke="#8c939c" stroke-width="3.6" stroke-linecap="round" stroke-linejoin="round"/></svg>
<svg style="left:208.0px;top:1305.3px;" width="36.0" height="12.0" viewBox="0 0 36 12"><g fill="#8c939c"><circle cx="5.5" cy="5.6" r="4.1"/><circle cx="17.5" cy="5.6" r="4.1"/><circle cx="29.7" cy="5.6" r="4.1"/></g></svg>
<svg style="left:274.6px;top:1289.0px;" width="30.0" height="44.0" viewBox="0 0 30 44"><g fill="none" stroke="#b0b0b0" stroke-width="3.4" stroke-linecap="round" stroke-linejoin="round"><line x1="5" y1="2.6" x2="24" y2="2.6"/><path d="M8.6 3 L8.6 18 L2.6 24.5 L2.6 26.8 L26.6 26.8 L26.6 24.5 L20.6 18 L20.6 3"/><line x1="14.6" y1="27" x2="14.6" y2="41"/></g></svg>
<span class="t" style="left:439.5px;top:1277.9px;font-size:32.5px;line-height:41px;color:#0f4f9c;-webkit-text-stroke:0.25px;letter-spacing:-0.77px;text-decoration:underline;text-decoration-thickness:2.4px;text-underline-offset:3px;">10407</span>
<span class="t" style="left:688.0px;top:1277.9px;font-size:32.5px;line-height:41px;color:#0f4f9c;-webkit-text-stroke:0.25px;letter-spacing:0.21px;text-decoration:underline;text-decoration-thickness:2.4px;text-underline-offset:3px;">Oliver Brown</span>
<span class="t" style="left:937.5px;top:1277.9px;font-size:32.5px;line-height:41px;color:#0f4f9c;-webkit-text-stroke:0.25px;letter-spacing:0.05px;text-decoration:underline;text-decoration-thickness:2.4px;text-underline-offset:3px;">Engineer</span>
<span class="t" style="left:1313.5px;top:1277.9px;font-size:32.5px;line-height:41px;color:#0f4f9c;-webkit-text-stroke:0.25px;letter-spacing:0.24px;text-decoration:underline;text-decoration-thickness:2.4px;text-underline-offset:3px;">Thursday Global Co.,</span>
<span class="t" style="left:1313.5px;top:1319.9px;font-size:32.5px;line-height:41px;color:#0f4f9c;-webkit-text-stroke:0.25px;letter-spacing:0.27px;text-decoration:underline;text-decoration-thickness:2.4px;text-underline-offset:3px;">Ltd.</span>
<span class="t" style="left:48.5px;top:1417.1px;font-size:32.5px;line-height:41px;color:#0f4f9c;-webkit-text-stroke:0.25px;letter-spacing:-0.86px;text-decoration:underline;text-decoration-thickness:2.4px;text-underline-offset:3px;">See More</span>
<span class="t" style="left:208.6px;top:1417.1px;font-size:32.5px;line-height:41px;color:#555;-webkit-text-stroke:0.25px;letter-spacing:0.12px;">Showing 50 records out of 56 total</span>
<div style="left:1368.0px;top:174.0px;width:60.0px;height:1317.2px;background:linear-gradient(to right,rgba(0,0,0,0) 0%,rgba(0,0,0,.012) 25%,rgba(0,0,0,.04) 55%,rgba(0,0,0,.09) 80%,rgba(0,0,0,.16) 100%);"></div>
<div style="left:1428.0px;top:174.0px;width:1530.0px;height:1317.2px;background:#fff;"></div>
<div style="left:1470.3px;top:187.2px;width:83.2px;height:83.8px;border:2px solid #a3abb2;border-radius:9px;background:#fff;"></div>
<svg style="left:1498.0px;top:215.0px;" width="32.0" height="32.0" viewBox="0 0 32 32"><g stroke="#444b52" stroke-width="3.6" stroke-linecap="round"><line x1="6.6" y1="6.6" x2="25.4" y2="25.6"/><line x1="25.4" y1="6.6" x2="6.6" y2="25.6"/></g></svg>
<svg style="left:1590.0px;top:217.0px;" width="24.0" height="24.0" viewBox="0 0 24 24"><path d="M18 4.5 L5 12 L18 19.5" fill="none" stroke="#222" stroke-width="2.4"/></svg>
<svg style="left:1642.0px;top:217.0px;" width="24.0" height="24.0" viewBox="0 0 24 24"><path d="M4 4.5 L17 12 L4 19.5" fill="none" stroke="#222" stroke-width="2.4"/></svg>
<div style="left:1700.9px;top:200.2px;width:178.2px;height:57.6px;background:#b9eef0;border-radius:29px;"></div>
<span class="t" style="left:1719.8px;top:209.3px;font-size:37px;line-height:46px;color:#5d6b70;-webkit-text-stroke:0.25px;letter-spacing:0.51px;">Process</span>
<svg style="left:2674.0px;top:211.0px;" width="54.0" height="42.0" viewBox="0 0 54 42"><rect x="6" y="6" width="42" height="30.6" rx="3.5" fill="none" stroke="#444b52" stroke-width="4.2"/><path d="M7 8 L26.8 21 L47 8" fill="none" stroke="#444b52" stroke-width="4.2" stroke-linejoin="round"/></svg>
<div style="left:2706.8px;top:185.2px;width:41.4px;height:41.4px;background:#3b7cc0;border-radius:50%;"></div>
<span class="t" style="left:2719.6px;top:189.4px;font-size:27px;line-height:34px;color:#fff;-webkit-text-stroke:0.25px;">0</span>
<svg style="left:2786.0px;top:207.0px;" width="46.0" height="50.0" viewBox="0 0 46 50"><g fill="none" stroke="#444b52" stroke-width="4"><line x1="10.5" y1="25.3" x2="34.7" y2="10.7"/><line x1="10.5" y1="25.3" x2="34.7" y2="40.2"/></g><g fill="#fff" stroke="#444b52" stroke-width="4"><circle cx="10.5" cy="25.3" r="4.8"/><circle cx="34.7" cy="10.7" r="4.8"/><circle cx="34.7" cy="40.2" r="4.8"/></g></svg>
<svg style="left:2890.0px;top:208.0px;" width="54.0" height="50.0" viewBox="0 0 54 50"><g fill="#fff" stroke="#444b52" stroke-width="4" stroke-linejoin="round"><rect x="14.2" y="6.3" width="24.6" height="14" rx="2.5"/><rect x="5.3" y="18.3" width="42.5" height="17.7" rx="5"/><rect x="14.2" y="30" width="24.6" height="12.8" rx="2.5"/></g><circle cx="40.4" cy="23.8" r="2.1" fill="#444b52"/></svg>
<svg style="left:1481.5px;top:283.6px;" width="30.0" height="44.0" viewBox="0 0 30 44"><g fill="none" stroke="#b0b0b0" stroke-width="3.4" stroke-linecap="round" stroke-linejoin="round"><line x1="5" y1="2.6" x2="24" y2="2.6"/><path d="M8.6 3 L8.6 18 L2.6 24.5 L2.6 26.8 L26.6 26.8 L26.6 24.5 L20.6 18 L20.6 3"/><line x1="14.6" y1="27" x2="14.6" y2="41"/></g></svg>
<span class="t" style="left:1534.7px;top:281.4px;font-size:43.5px;line-height:54px;color:#000;font-weight:700;letter-spacing:-0.19px;">Amelia Taylor / Thursday Global Co., Ltd. (10427)</span>
<div style="left:1428.0px;top:346.4px;width:1530.0px;height:2.0px;background:#e6e6e6;"></div>
<div style="left:1471.6px;top:350.4px;width:1461.8px;height:47.2px;background:#d5dade;"></div>
<span class="t" style="left:1493.0px;top:349.0px;font-size:33px;line-height:41px;color:#000;-webkit-text-stroke:0.25px;letter-spacing:0.71px;">System Information</span>
<svg style="left:2887.0px;top:356.0px;" width="26.0" height="16.0" viewBox="0 0 26 16"><path d="M3.4 12.6 L12.4 4 L21.4 12.6" fill="none" stroke="#9a9a9a" stroke-width="2.8" stroke-linejoin="round"/></svg>
<div style="left:1470.4px;top:397.5px;width:1463.2px;height:237.0px;border:2px solid #e1e4e7;border-top:none;border-radius:0 0 9px 9px;background:#fff;overflow:hidden;"><div style="left:0;top:0;width:298px;height:240px;background:#eff2f5"></div><div style="left:730.2px;top:0;width:299.6px;height:240px;background:#eff2f5"></div><div style="left:0;top:63px;width:1470px;height:2px;background:#e1e4e7"></div><div style="left:0;top:170px;width:1470px;height:2px;background:#e1e4e7"></div></div>
<span class="t" style="left:1561.3px;top:411.9px;font-size:32.5px;line-height:41px;color:#000;-webkit-text-stroke:0.25px;letter-spacing:-0.34px;">Date Created</span>
<span class="t" style="left:1792.0px;top:411.9px;font-size:32.5px;line-height:41px;color:#000;-webkit-text-stroke:0.25px;letter-spacing:-0.23px;">2026/04/07 17:45:09</span>
<span class="t" style="left:2278.4px;top:411.9px;font-size:32.5px;line-height:41px;color:#000;-webkit-text-stroke:0.25px;letter-spacing:0.32px;">Date Updated</span>
<span class="t" style="left:2522.0px;top:411.9px;font-size:32.5px;line-height:41px;color:#000;-webkit-text-stroke:0.25px;letter-spacing:-0.17px;">2026/04/07 17:45:09</span>
<span class="t" style="left:1553.0px;top:477.4px;font-size:32.5px;line-height:41px;color:#000;-webkit-text-stroke:0.25px;letter-spacing:-0.46px;">Registered by</span>
<span class="t" style="left:1791.0px;top:477.4px;font-size:32.5px;line-height:41px;color:#000;-webkit-text-stroke:0.25px;letter-spacing:0.27px;">[User Department] [User</span>
<span class="t" style="left:1791.0px;top:519.7px;font-size:32.5px;line-height:41px;color:#000;-webkit-text-stroke:0.25px;letter-spacing:0.93px;">Name]</span>
<span class="t" style="left:2310.7px;top:477.4px;font-size:32.5px;line-height:41px;color:#000;-webkit-text-stroke:0.25px;letter-spacing:0.30px;">Updated by</span>
<span class="t" style="left:2521.0px;top:477.4px;font-size:32.5px;line-height:41px;color:#000;-webkit-text-stroke:0.25px;letter-spacing:0.30px;">[User Department] [User</span>
<span class="t" style="left:2521.0px;top:519.7px;font-size:32.5px;line-height:41px;color:#000;-webkit-text-stroke:0.25px;letter-spacing:1.15px;">Name]</span>
<span class="t" style="left:1598.8px;top:584.5px;font-size:32.5px;line-height:41px;color:#000;-webkit-text-stroke:0.25px;letter-spacing:-0.83px;">Process ID</span>
<span class="t" style="left:1791.0px;top:584.5px;font-size:32.5px;line-height:41px;color:#000;-webkit-text-stroke:0.25px;letter-spacing:-0.42px;">10427</span>
<div style="left:1449.8px;top:663.8px;width:130.0px;height:67.2px;border:2px solid #a3abb2;border-radius:10px;background:#fff;"></div>
<span class="t" style="left:1484.4px;top:680.3px;font-size:32.5px;line-height:41px;color:#000;-webkit-text-stroke:0.25px;letter-spacing:0.78px;">Edit</span>
<div style="left:1601.2px;top:663.8px;width:199.9px;height:67.2px;border:2px solid #a3abb2;border-radius:10px;background:#fff;"></div>
<span class="t" style="left:1623.8px;top:680.3px;font-size:32.5px;line-height:41px;color:#000;-webkit-text-stroke:0.25px;letter-spacing:0.73px;">Document</span>
<div style="left:1821.7px;top:663.8px;width:337.9px;height:67.2px;border:2px solid #a3abb2;border-radius:10px;background:#fff;"></div>
<span class="t" style="left:1844.3px;top:680.3px;font-size:32.5px;line-height:41px;color:#000;-webkit-text-stroke:0.25px;letter-spacing:-0.15px;">Email to HR Contact</span>
<div style="left:2181.0px;top:663.8px;width:324.0px;height:67.2px;border:2px solid #a3abb2;border-radius:10px;background:#fff;"></div>
<span class="t" style="left:2203.5px;top:680.3px;font-size:32.5px;line-height:41px;color:#000;-webkit-text-stroke:0.25px;letter-spacing:0.26px;">Email to Candidate</span>
<div style="left:2525.7px;top:663.8px;width:140.4px;height:67.2px;border:2px solid #a3abb2;border-radius:10px;background:#fff;"></div>
<span class="t" style="left:2548.2px;top:680.3px;font-size:32.5px;line-height:41px;color:#000;-webkit-text-stroke:0.25px;letter-spacing:0.23px;">Delete</span>
<div style="left:1428.0px;top:773.0px;width:1530.0px;height:2.0px;background:#e6e6e6;"></div>
<span class="t" style="left:1483.8px;top:816.1px;font-size:38px;line-height:48px;color:#2a2a2a;font-weight:700;letter-spacing:-0.74px;">Sublists</span>
<div style="left:1470.4px;top:878.4px;width:1464.6px;height:502.4px;border:7px solid #1fb9c3;border-radius:12px;background:#fff;"></div>
<div style="left:1477.4px;top:885.4px;width:1450.6px;height:85.7px;background:#d5f5f7;border-radius:5px 5px 0 0;"></div>
<span class="t" style="left:1510.0px;top:910.9px;font-size:32.5px;line-height:41px;color:#000;-webkit-text-stroke:0.25px;letter-spacing:0.22px;">Process History (1)</span>
<div style="left:2632.0px;top:892.6px;width:193.4px;height:67.8px;border:2px solid #a5aab0;border-radius:10px;background:#eff3f6;"></div>
<span class="t" style="left:2655.5px;top:907.1px;font-size:31px;line-height:39px;color:#000;-webkit-text-stroke:0.25px;letter-spacing:0.19px;">+Add New</span>
<div style="left:2833.5px;top:892.6px;width:60.8px;height:63.8px;border:2px solid #a9adb2;border-radius:10px;background:#fff;"></div>
<svg style="left:2846.0px;top:905.0px;" width="38.0" height="38.0" viewBox="0 0 38 38"><path d="M26.88 9.43 A12.2 12.2 0 1 0 29.77 21.47" fill="none" stroke="#484e56" stroke-width="3.6"/><polygon points="32.30,4.30 32.30,16.01 20.59,16.01" fill="#484e56"/></svg>
<div style="left:1477.4px;top:970.2px;width:1450.6px;height:383.0px;border:2px solid #e1e4e7;border-top:none;border-radius:0 0 9px 9px;background:#fff;overflow:hidden;"><div style="left:0;top:0;width:1460px;height:147.5px;background:#f5f8fb"></div><div style="left:0;top:147px;width:1460px;height:2px;background:#e1e4e7"></div></div>
<div style="left:1623.8px;top:970.2px;width:2.0px;height:147.8px;background:#e2e2e2;"></div>
<div style="left:1786.8px;top:970.2px;width:2.0px;height:147.8px;background:#e2e2e2;"></div>
<div style="left:1949.9px;top:970.2px;width:2.0px;height:147.8px;background:#e2e2e2;"></div>
<div style="left:2112.9px;top:970.2px;width:2.0px;height:147.8px;background:#e2e2e2;"></div>
<div style="left:2275.9px;top:970.2px;width:2.0px;height:147.8px;background:#e2e2e2;"></div>
<div style="left:2438.9px;top:970.2px;width:2.0px;height:147.8px;background:#e2e2e2;"></div>
<div style="left:2602.0px;top:970.2px;width:2.0px;height:147.8px;background:#e2e2e2;"></div>
<div style="left:2765.0px;top:970.2px;width:2.0px;height:147.8px;background:#e2e2e2;"></div>
<span class="t" style="left:1646.7px;top:984.2px;font-size:32.5px;line-height:41px;color:#000;-webkit-text-stroke:0.25px;letter-spacing:-0.74px;">Phase</span>
<span class="t" style="left:1809.7px;top:984.2px;font-size:32.5px;line-height:41px;color:#000;-webkit-text-stroke:0.25px;letter-spacing:-0.42px;">Date</span>
<span class="t" style="left:1972.8px;top:984.2px;font-size:32.5px;line-height:41px;color:#000;-webkit-text-stroke:0.25px;letter-spacing:0.26px;">Memo</span>
<span class="t" style="left:2134.8px;top:984.2px;font-size:32.5px;line-height:41px;color:#000;-webkit-text-stroke:0.25px;letter-spacing:-0.56px;">Process</span>
<span class="t" style="left:2135.8px;top:1025.9px;font-size:32.5px;line-height:41px;color:#000;-webkit-text-stroke:0.25px;letter-spacing:0.33px;">Owner</span>
<span class="t" style="left:2299.0px;top:984.2px;font-size:32.5px;line-height:41px;color:#000;-webkit-text-stroke:0.25px;letter-spacing:0.40px;">Candid</span>
<span class="t" style="left:2299.0px;top:1025.9px;font-size:32.5px;line-height:41px;color:#000;-webkit-text-stroke:0.25px;letter-spacing:0.45px;">ate</span>
<span class="t" style="left:2299.0px;top:1067.5px;font-size:32.5px;line-height:41px;color:#000;-webkit-text-stroke:0.25px;letter-spacing:0.18px;">Owner</span>
<span class="t" style="left:2463.0px;top:984.2px;font-size:32.5px;line-height:41px;color:#000;-webkit-text-stroke:0.25px;letter-spacing:0.59px;">Job</span>
<span class="t" style="left:2462.0px;top:1025.9px;font-size:32.5px;line-height:41px;color:#000;-webkit-text-stroke:0.25px;letter-spacing:0.28px;">Owner</span>
<span class="t" style="left:2624.0px;top:984.2px;font-size:32.5px;line-height:41px;color:#000;-webkit-text-stroke:0.25px;letter-spacing:-0.09px;">Date</span>
<span class="t" style="left:2624.0px;top:1025.9px;font-size:32.5px;line-height:41px;color:#000;-webkit-text-stroke:0.25px;letter-spacing:0.86px;">Update</span>
<span class="t" style="left:2625.0px;top:1067.5px;font-size:32.5px;line-height:41px;color:#000;-webkit-text-stroke:0.25px;">d</span>
<span class="t" style="left:2787.0px;top:984.2px;font-size:32.5px;line-height:41px;color:#000;-webkit-text-stroke:0.25px;letter-spacing:0.86px;">Update</span>
<span class="t" style="left:2788.0px;top:1025.9px;font-size:32.5px;line-height:41px;color:#000;-webkit-text-stroke:0.25px;letter-spacing:-1.36px;">d By</span>
<span class="t" style="left:1644.6px;top:1133.3px;font-size:32.5px;line-height:41px;color:#000;-webkit-text-stroke:0.25px;letter-spacing:0.61px;">Shortlis</span>
<span class="t" style="left:1645.6px;top:1175.3px;font-size:32.5px;line-height:41px;color:#000;-webkit-text-stroke:0.25px;letter-spacing:1.15px;">ted</span>
<span class="t" style="left:1807.2px;top:1133.3px;font-size:32.5px;line-height:41px;color:#000;-webkit-text-stroke:0.25px;letter-spacing:-0.10px;">2026/04</span>
<span class="t" style="left:1808.2px;top:1175.3px;font-size:32.5px;line-height:41px;color:#000;-webkit-text-stroke:0.25px;letter-spacing:0.50px;">/07</span>
<span class="t" style="left:1806.2px;top:1217.3px;font-size:32.5px;line-height:41px;color:#000;-webkit-text-stroke:0.25px;letter-spacing:-0.43px;">17:44:0</span>
<span class="t" style="left:1807.2px;top:1259.3px;font-size:32.5px;line-height:41px;color:#000;-webkit-text-stroke:0.25px;">0</span>
<span class="t" style="left:2133.6px;top:1133.3px;font-size:32.5px;line-height:41px;color:#000;-webkit-text-stroke:0.25px;letter-spacing:-0.21px;">[User</span>
<span class="t" style="left:2133.6px;top:1175.3px;font-size:32.5px;line-height:41px;color:#000;-webkit-text-stroke:0.25px;letter-spacing:0.38px;">Depart</span>
<span class="t" style="left:2133.6px;top:1217.3px;font-size:32.5px;line-height:41px;color:#000;-webkit-text-stroke:0.25px;letter-spacing:1.86px;">ment]</span>
<span class="t" style="left:2133.6px;top:1259.3px;font-size:32.5px;line-height:41px;color:#000;-webkit-text-stroke:0.25px;letter-spacing:-0.21px;">[User</span>
<span class="t" style="left:2133.6px;top:1301.3px;font-size:32.5px;line-height:41px;color:#000;-webkit-text-stroke:0.25px;letter-spacing:0.68px;">Name]</span>
<span class="t" style="left:2296.7px;top:1133.3px;font-size:32.5px;line-height:41px;color:#000;-webkit-text-stroke:0.25px;letter-spacing:-0.21px;">[User</span>
<span class="t" style="left:2296.7px;top:1175.3px;font-size:32.5px;line-height:41px;color:#000;-webkit-text-stroke:0.25px;letter-spacing:0.38px;">Depart</span>
<span class="t" style="left:2296.7px;top:1217.3px;font-size:32.5px;line-height:41px;color:#000;-webkit-text-stroke:0.25px;letter-spacing:1.86px;">ment]</span>
<span class="t" style="left:2296.7px;top:1259.3px;font-size:32.5px;line-height:41px;color:#000;-webkit-text-stroke:0.25px;letter-spacing:-0.21px;">[User</span>
<span class="t" style="left:2296.7px;top:1301.3px;font-size:32.5px;line-height:41px;color:#000;-webkit-text-stroke:0.25px;letter-spacing:0.68px;">Name]</span>
<span class="t" style="left:2459.7px;top:1133.3px;font-size:32.5px;line-height:41px;color:#000;-webkit-text-stroke:0.25px;letter-spacing:-0.21px;">[User</span>
<span class="t" style="left:2459.7px;top:1175.3px;font-size:32.5px;line-height:41px;color:#000;-webkit-text-stroke:0.25px;letter-spacing:0.38px;">Depart</span>
<span class="t" style="left:2459.7px;top:1217.3px;font-size:32.5px;line-height:41px;color:#000;-webkit-text-stroke:0.25px;letter-spacing:1.86px;">ment]</span>
<span class="t" style="left:2459.7px;top:1259.3px;font-size:32.5px;line-height:41px;color:#000;-webkit-text-stroke:0.25px;letter-spacing:-0.21px;">[User</span>
<span class="t" style="left:2459.7px;top:1301.3px;font-size:32.5px;line-height:41px;color:#000;-webkit-text-stroke:0.25px;letter-spacing:0.68px;">Name]</span>
<span class="t" style="left:2785.8px;top:1133.3px;font-size:32.5px;line-height:41px;color:#000;-webkit-text-stroke:0.25px;letter-spacing:-0.21px;">[User</span>
<span class="t" style="left:2785.8px;top:1175.3px;font-size:32.5px;line-height:41px;color:#000;-webkit-text-stroke:0.25px;letter-spacing:0.38px;">Depart</span>
<span class="t" style="left:2785.8px;top:1217.3px;font-size:32.5px;line-height:41px;color:#000;-webkit-text-stroke:0.25px;letter-spacing:1.86px;">ment]</span>
<span class="t" style="left:2785.8px;top:1259.3px;font-size:32.5px;line-height:41px;color:#000;-webkit-text-stroke:0.25px;letter-spacing:-0.21px;">[User</span>
<span class="t" style="left:2785.8px;top:1301.3px;font-size:32.5px;line-height:41px;color:#000;-webkit-text-stroke:0.25px;letter-spacing:0.68px;">Name]</span>
<span class="t" style="left:2622.2px;top:1133.3px;font-size:32.5px;line-height:41px;color:#000;-webkit-text-stroke:0.25px;letter-spacing:0.02px;">2026/04</span>
<span class="t" style="left:2623.2px;top:1175.3px;font-size:32.5px;line-height:41px;color:#000;-webkit-text-stroke:0.25px;letter-spacing:0.50px;">/07</span>
<span class="t" style="left:2621.2px;top:1217.3px;font-size:32.5px;line-height:41px;color:#000;-webkit-text-stroke:0.25px;letter-spacing:-0.28px;">17:45:0</span>
<span class="t" style="left:2622.2px;top:1259.3px;font-size:32.5px;line-height:41px;color:#000;-webkit-text-stroke:0.25px;">9</span>
<svg style="left:1514.8px;top:1131.2px;" width="38.0" height="39.0" viewBox="0 0 38 39"><polygon points="0,0 37.2,0 37.2,38.4 18.6,23.6 0,38.4" fill="#14529e"/></svg>
<svg style="left:1568.0px;top:1154.0px;" width="38.0" height="12.0" viewBox="0 0 38 12"><g fill="#9da3a9"><circle cx="6.5" cy="6.3" r="4"/><circle cx="18.5" cy="6.3" r="4"/><circle cx="30.5" cy="6.3" r="4"/></g></svg>
<div style="left:1469.7px;top:1396.0px;width:1464.9px;height:86.4px;background:#e3effb;border-radius:11px 11px 0 0;"></div>
<span class="t" style="left:1503.7px;top:1421.0px;font-size:32.5px;line-height:41px;color:#000;-webkit-text-stroke:0.25px;letter-spacing:-0.28px;">Sales (0)</span>
<span class="t" style="left:2207.5px;top:1421.0px;font-size:32.5px;line-height:41px;color:#0f4f9c;-webkit-text-stroke:0.25px;letter-spacing:-0.58px;text-decoration:underline;text-decoration-thickness:2.4px;text-underline-offset:3px;">Sales List</span>
<svg style="left:2351.0px;top:1420.0px;" width="36.0" height="36.0" viewBox="0 0 36 36"><g fill="none" stroke="#aaa" stroke-width="3.2" stroke-linejoin="round" stroke-linecap="round"><path d="M14 5.5 L5 5.5 Q3.6 5.5 3.6 7 L3.6 30 Q3.6 31.4 5 31.4 L28 31.4 Q29.6 31.4 29.6 30 L29.6 21"/><path d="M20 3.6 L32.4 3.6 L32.4 16"/><line x1="32" y1="4" x2="14.5" y2="21.5"/></g></svg>
<div style="left:2410.8px;top:1404.0px;width:193.2px;height:68.0px;border:2px solid #a3abb2;border-radius:10px;background:#fff;"></div>
<span class="t" style="left:2434.7px;top:1418.1px;font-size:31px;line-height:39px;color:#000;-webkit-text-stroke:0.25px;letter-spacing:0.19px;">+Add New</span>
<div style="left:2614.0px;top:1404.0px;width:218.0px;height:68.0px;border:2px solid #a3abb2;border-radius:10px;background:#fff;"></div>
<span class="t" style="left:2636.4px;top:1418.1px;font-size:31px;line-height:39px;color:#000;-webkit-text-stroke:0.25px;letter-spacing:0.44px;">Bulk Update</span>
<div style="left:2841.0px;top:1403.6px;width:60.0px;height:61.3px;border:2px solid #a9aeb3;border-radius:10px;background:#fff;"></div>
<svg style="left:2853.0px;top:1417.5px;" width="38.0" height="38.0" viewBox="0 0 38 38"><path d="M27.20 10.79 A12.1 12.1 0 1 0 30.07 22.74" fill="none" stroke="#484e56" stroke-width="3.6"/><polygon points="32.60,5.70 32.60,17.32 20.98,17.32" fill="#484e56"/></svg>
<div style="left:1435.7px;top:1246.5px;width:2.2px;height:62.1px;background:#d0d0d0;"></div>
<div style="left:1444.3px;top:1246.5px;width:2.2px;height:62.1px;background:#d0d0d0;"></div>
<div style="left:1060.0px;top:698.0px;width:368.0px;height:378.0px;background:#e3effb;border-radius:11px 0 0 11px;box-shadow:0 6px 36px rgba(0,0,0,.28);"></div>
<div style="left:1060.0px;top:792.0px;width:368.0px;height:95.0px;background:#fff;"></div>
<div style="left:1060.0px;top:792.0px;width:7.3px;height:95.0px;background:#12a5ab;"></div>
<span class="t" style="left:1087.3px;top:724.9px;font-size:32.5px;line-height:41px;color:#000;-webkit-text-stroke:0.25px;letter-spacing:0.45px;">Process details</span>
<span class="t" style="left:1087.3px;top:819.2px;font-size:32.5px;line-height:41px;color:#000;-webkit-text-stroke:0.25px;letter-spacing:0.39px;">Process History (1)</span>
<span class="t" style="left:1088.3px;top:914.0px;font-size:32.5px;line-height:41px;color:#000;-webkit-text-stroke:0.25px;letter-spacing:-0.23px;">Sales (0)</span>
<span class="t" style="left:1089.3px;top:1007.5px;font-size:32.5px;line-height:41px;color:#000;-webkit-text-stroke:0.25px;letter-spacing:0.85px;">Attachment (0)</span>
<div style="left:390.0px;top:715.7px;width:189.0px;height:110.9px;border:15px solid rgba(250,98,18,.96);"></div>
<div style="left:1031.8px;top:767.6px;width:425.7px;height:146.9px;border:15px solid rgba(250,98,18,.96);"></div>
<div style="left:2611.0px;top:869.5px;width:236.0px;height:111.1px;border:15px solid rgba(250,98,18,.96);"></div>
<svg style="left:0.0px;top:0.0px;" width="2966.0" height="1499.0" viewBox="0 0 2966 1499"><polygon points="607.6,786.7 934.2,826.8 930.6,856.5 1009.6,828.2 939.8,781.6 936.1,811.4 609.4,771.3" fill="rgba(250,98,18,.96)"/><polygon points="1657.6,846.1 2484.4,921.6 2481.6,951.4 2559.0,921.3 2488.4,877.7 2485.7,907.5 1658.8,831.9" fill="rgba(250,98,18,.96)"/></svg>
</div></body></html>
